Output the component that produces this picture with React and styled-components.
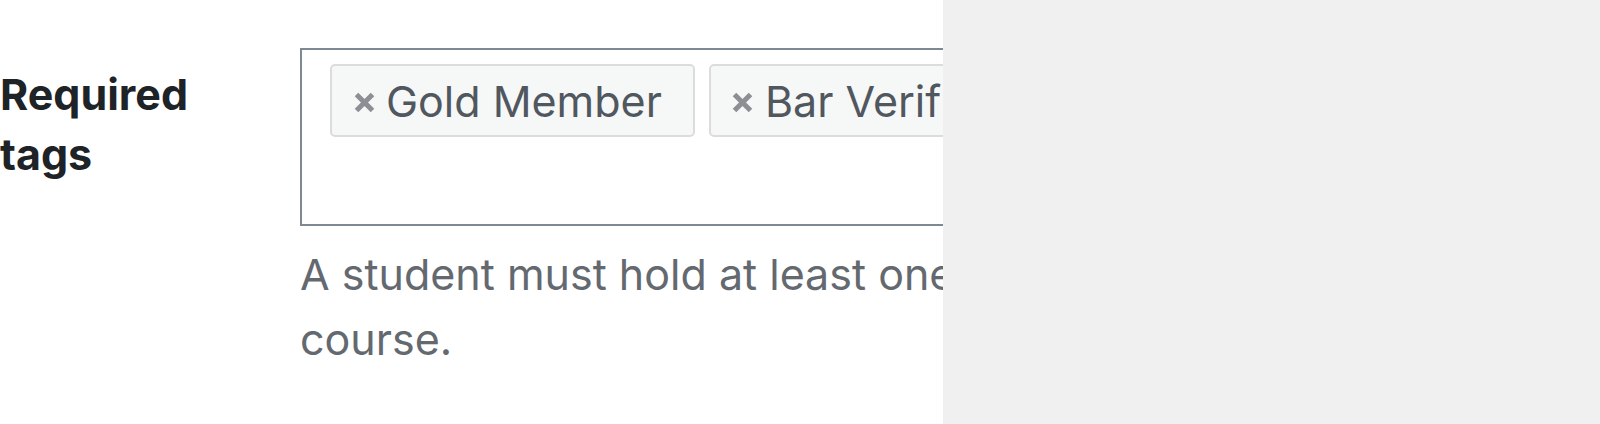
import styled, { createGlobalStyle } from 'styled-components';

const GlobalStyle = createGlobalStyle`
  html, body {
    margin: 0;
    padding: 0;
    background: #ffffff;
  }
  body {
    font-family: Inter, "Liberation Sans", Arial, sans-serif;
    -webkit-font-smoothing: antialiased;
  }
`;

const Page = styled.div`
  display: flex;
  width: 1600px;
  height: 424px;
  overflow: hidden;
`;

const Main = styled.main`
  width: 943px;
  flex-shrink: 0;
  overflow: hidden;
  background: #ffffff;
`;

const Side = styled.aside`
  flex: 1;
  background: #f0f0f1;
`;

const FieldRow = styled.div`
  display: grid;
  grid-template-columns: 300px 1320px;
  padding-top: 48px;
`;

const Label = styled.label`
  padding-top: 16px;
  font-size: 43px;
  line-height: 60px;
  font-weight: 700;
  color: #1d2327;
  width: 200px;
`;

const Control = styled.div`
  display: flex;
  flex-direction: column;
`;

const TagBox = styled.div`
  box-sizing: border-box;
  height: 178px;
  border: 2px solid #7e8993;
  background: #ffffff;
  padding: 14px 28px;
  display: flex;
  align-items: flex-start;
  gap: 14px;
`;

const Chip = styled.span`
  box-sizing: border-box;
  display: inline-flex;
  align-items: center;
  gap: 10px;
  height: 73px;
  padding: 0 31px 0 20px;
  border: 2px solid #dcdcde;
  border-radius: 5px;
  background: #f6f7f7;
  color: #50575e;
  font-size: 43px;
  white-space: nowrap;
`;

const Remove = styled.button`
  display: inline-flex;
  align-items: center;
  justify-content: center;
  width: 24px;
  height: 24px;
  padding: 0;
  margin-top: 4px;
  border: 0;
  background: none;
  color: #8c8f94;
  cursor: pointer;
`;

const Description = styled.p`
  margin: 16px 0 0;
  font-size: 43px;
  line-height: 65px;
  color: #646970;
`;

const CloseIcon = () => (
  <svg width="23" height="21" viewBox="0 0 23 21" aria-hidden="true">
    <path
      d="M3.5 2.5 L19.5 18.5 M19.5 2.5 L3.5 18.5"
      stroke="currentColor"
      strokeWidth="5"
      fill="none"
    />
  </svg>
);

const tags = ['Gold Member', 'Bar Verified'];

const App = () => {
  return (
    <>
      <GlobalStyle />
      <Page>
        <Main>
          <FieldRow>
            <Label>Required tags</Label>
            <Control>
              <TagBox>
                {tags.map(tag => (
                  <Chip key={tag}>
                    <Remove aria-label={`Remove ${tag}`}>
                      <CloseIcon />
                    </Remove>
                    {tag}
                  </Chip>
                ))}
              </TagBox>
              <Description>
                A student must hold at least one of these tags to access this
                course.
              </Description>
            </Control>
          </FieldRow>
        </Main>
        <Side />
      </Page>
    </>
  );
};

export default App;
